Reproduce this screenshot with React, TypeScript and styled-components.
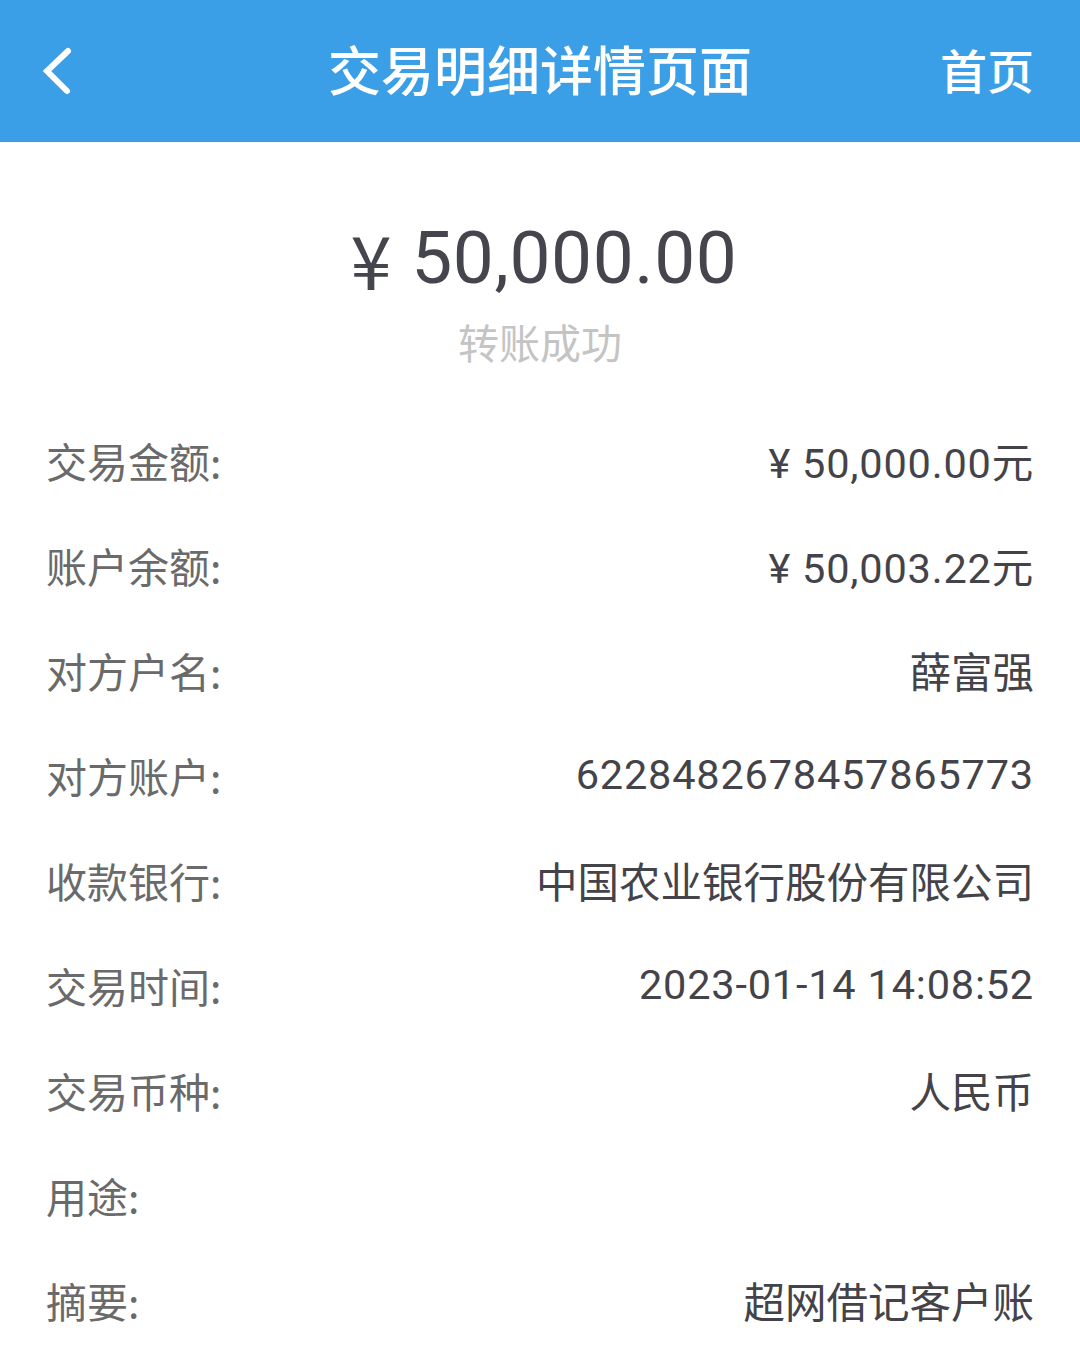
import React from 'react'
import styled, { createGlobalStyle } from 'styled-components'

const GlobalStyle = createGlobalStyle`
  html, body {
    margin: 0;
    padding: 0;
    background: #ffffff;
  }
  body {
    font-family: Roboto, "Noto Sans CJK SC", sans-serif;
  }
`

const rows = [
  { label: '交易金额:', value: '¥ 50,000.00元', numeric: true },
  { label: '账户余额:', value: '¥ 50,003.22元', numeric: true },
  { label: '对方户名:', value: '薛富强' },
  { label: '对方账户:', value: '6228482678457865773', numeric: true },
  { label: '收款银行:', value: '中国农业银行股份有限公司' },
  { label: '交易时间:', value: '2023-01-14 14:08:52', numeric: true },
  { label: '交易币种:', value: '人民币' },
  { label: '用途:', value: '' },
  { label: '摘要:', value: '超网借记客户账' },
]

const App = () => {
  return (
    <Page>
      <GlobalStyle />
      <TopBar>
        <BackButton aria-label="返回">
          <svg width="36" height="56" viewBox="0 0 36 56">
            <polyline
              points="28,11 7,31 27,51"
              fill="none"
              stroke="#ffffff"
              strokeWidth="6"
              strokeLinecap="round"
              strokeLinejoin="miter"
            />
          </svg>
        </BackButton>
        <Title>交易明细详情页面</Title>
        <HomeLink>首页</HomeLink>
      </TopBar>

      <Summary>
        <Amount>
          <Yen>¥</Yen>50,000.00
        </Amount>
        <Status>转账成功</Status>
      </Summary>

      <DetailList>
        {rows.map((row, index) => (
          <DetailRow key={index}>
            <Label>{row.label}</Label>
            <Value $numeric={!!row.numeric}>{row.value}</Value>
          </DetailRow>
        ))}
      </DetailList>
    </Page>
  )
}

export default App

const Page = styled.div`
  width: 1080px;
  min-height: 1354px;
  background: #ffffff;
  overflow: hidden;
`

const TopBar = styled.div`
  height: 142px;
  background: #3b9fe7;
  display: flex;
  align-items: center;
  justify-content: space-between;
  padding: 0 46px 6px 40px;
  box-sizing: border-box;
  position: relative;
`

const BackButton = styled.div`
  width: 36px;
  height: 56px;
  display: flex;
  align-items: center;
`

const Title = styled.div`
  position: absolute;
  left: 0;
  right: 0;
  top: 0;
  bottom: 6px;
  display: flex;
  align-items: center;
  justify-content: center;
  color: #ffffff;
  font-size: 53px;
  font-family: "Noto Sans CJK SC", sans-serif;
  font-weight: 500;
  pointer-events: none;
`

const HomeLink = styled.div`
  color: #ffffff;
  font-size: 47px;
  font-family: "Noto Sans CJK SC", sans-serif;
  font-weight: 500;
  position: relative;
`

const Summary = styled.div`
  display: flex;
  flex-direction: column;
  align-items: center;
  padding-top: 71px;
  padding-bottom: 41px;
`

const Amount = styled.div`
  font-size: 73px;
  line-height: 90px;
  letter-spacing: 0.6px;
  color: #45454d;
  font-family: Roboto, "Noto Sans CJK SC", sans-serif;
  display: flex;
  align-items: center;
  padding-left: 8px;
`

const Yen = styled.span`
  font-size: 74px;
  margin-right: 19px;
  font-family: "Noto Sans CJK SC", Roboto, sans-serif;
`

const Status = styled.div`
  margin-top: 13px;
  font-size: 41px;
  line-height: 50px;
  color: #c4c4c4;
  font-family: "Noto Sans CJK SC", sans-serif;
`

const DetailList = styled.div`
  display: flex;
  flex-direction: column;
  padding: 0 46px 0 46px;
`

const DetailRow = styled.div`
  height: 105px;
  display: flex;
  align-items: center;
  justify-content: space-between;
`

const Label = styled.span`
  font-size: 41px;
  color: #6a6a6a;
  font-family: "Noto Sans CJK SC", Roboto, sans-serif;
`

const Value = styled.span<{ $numeric: boolean }>`
  font-size: 41.5px;
  letter-spacing: ${p => (p.$numeric ? '0.8px' : '0')};
  color: #434349;
  font-family: Roboto, "Noto Sans CJK SC", sans-serif;
  text-align: right;
`
